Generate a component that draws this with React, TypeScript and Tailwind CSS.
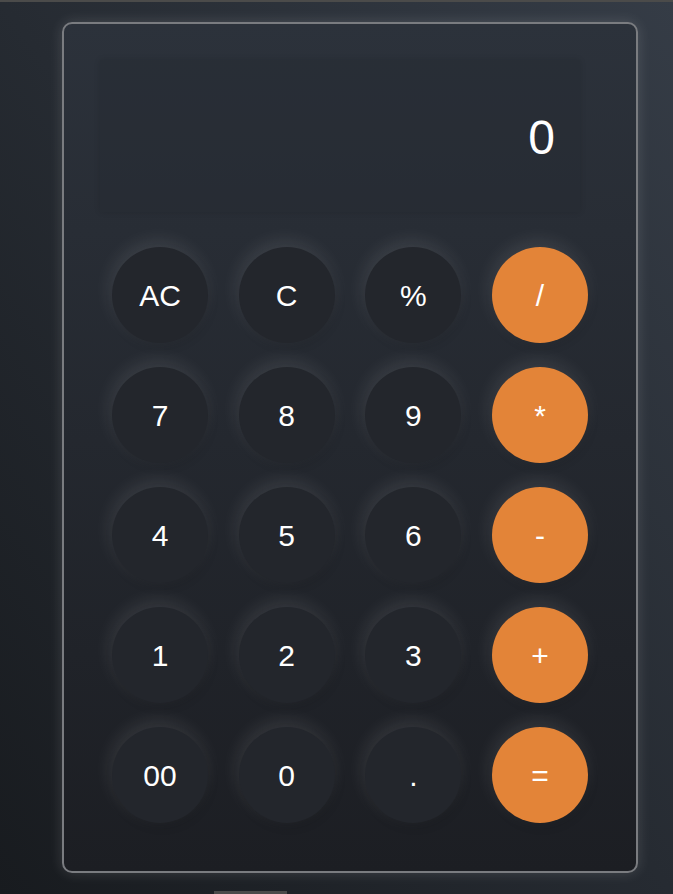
import React from "react"

const keys = [
  { label: "AC" },
  { label: "C" },
  { label: "%" },
  { label: "/", op: true },
  { label: "7" },
  { label: "8" },
  { label: "9" },
  { label: "*", op: true },
  { label: "4" },
  { label: "5" },
  { label: "6" },
  { label: "-", op: true },
  { label: "1" },
  { label: "2" },
  { label: "3" },
  { label: "+", op: true },
  { label: "00" },
  { label: "0" },
  { label: "." },
  { label: "=", op: true },
]

function Key({ label, op }: { label: string; op?: boolean }) {
  return (
    <button
      className={`w-24 h-24 rounded-full flex items-center justify-center text-[30px] text-white shadow-[-2px_-6px_18px_rgba(255,255,255,0.1),2px_4px_10px_rgba(0,0,0,0.12)] ${
        op ? "bg-[#e38438]" : "bg-[#23262c]"
      }`}
    >
      {label}
    </button>
  )
}

export default function App() {
  return (
    <div
      className="relative h-[894px] overflow-hidden bg-gradient-to-tr from-[#181b1f] via-[#262b32] to-[#353c46]"
      style={{ fontFamily: '"Liberation Sans", Arial, sans-serif' }}
    >
      <div className="h-[2px] bg-[#4b4b4a]" />
      <div className="pt-5 pl-[62px]">
        <div className="w-[576px] h-[851px] rounded-[10px] border-2 border-[#7a7c80] bg-gradient-to-b from-[#2c323b] to-[#1c1e23] shadow-[0_0_14px_rgba(255,255,255,0.14)] pt-[36px]">
          <div className="ml-[36px] w-[480px] h-[152px] flex items-center justify-end pr-[25px] pt-[4px] bg-[#262b33]/40 shadow-[0_0_6px_rgba(0,0,0,0.12)]">
            <span className="text-[48px] text-white leading-none">0</span>
          </div>
          <div className="mt-[35px] mx-[48px] grid grid-cols-[repeat(4,96px)] gap-y-6 justify-between">
            {keys.map(k => (
              <Key key={k.label} label={k.label} op={k.op} />
            ))}
          </div>
        </div>
      </div>
      <div className="absolute bottom-0 left-[214px] w-[73px] h-[3px] bg-[#4a4a4a]" />
    </div>
  )
}
